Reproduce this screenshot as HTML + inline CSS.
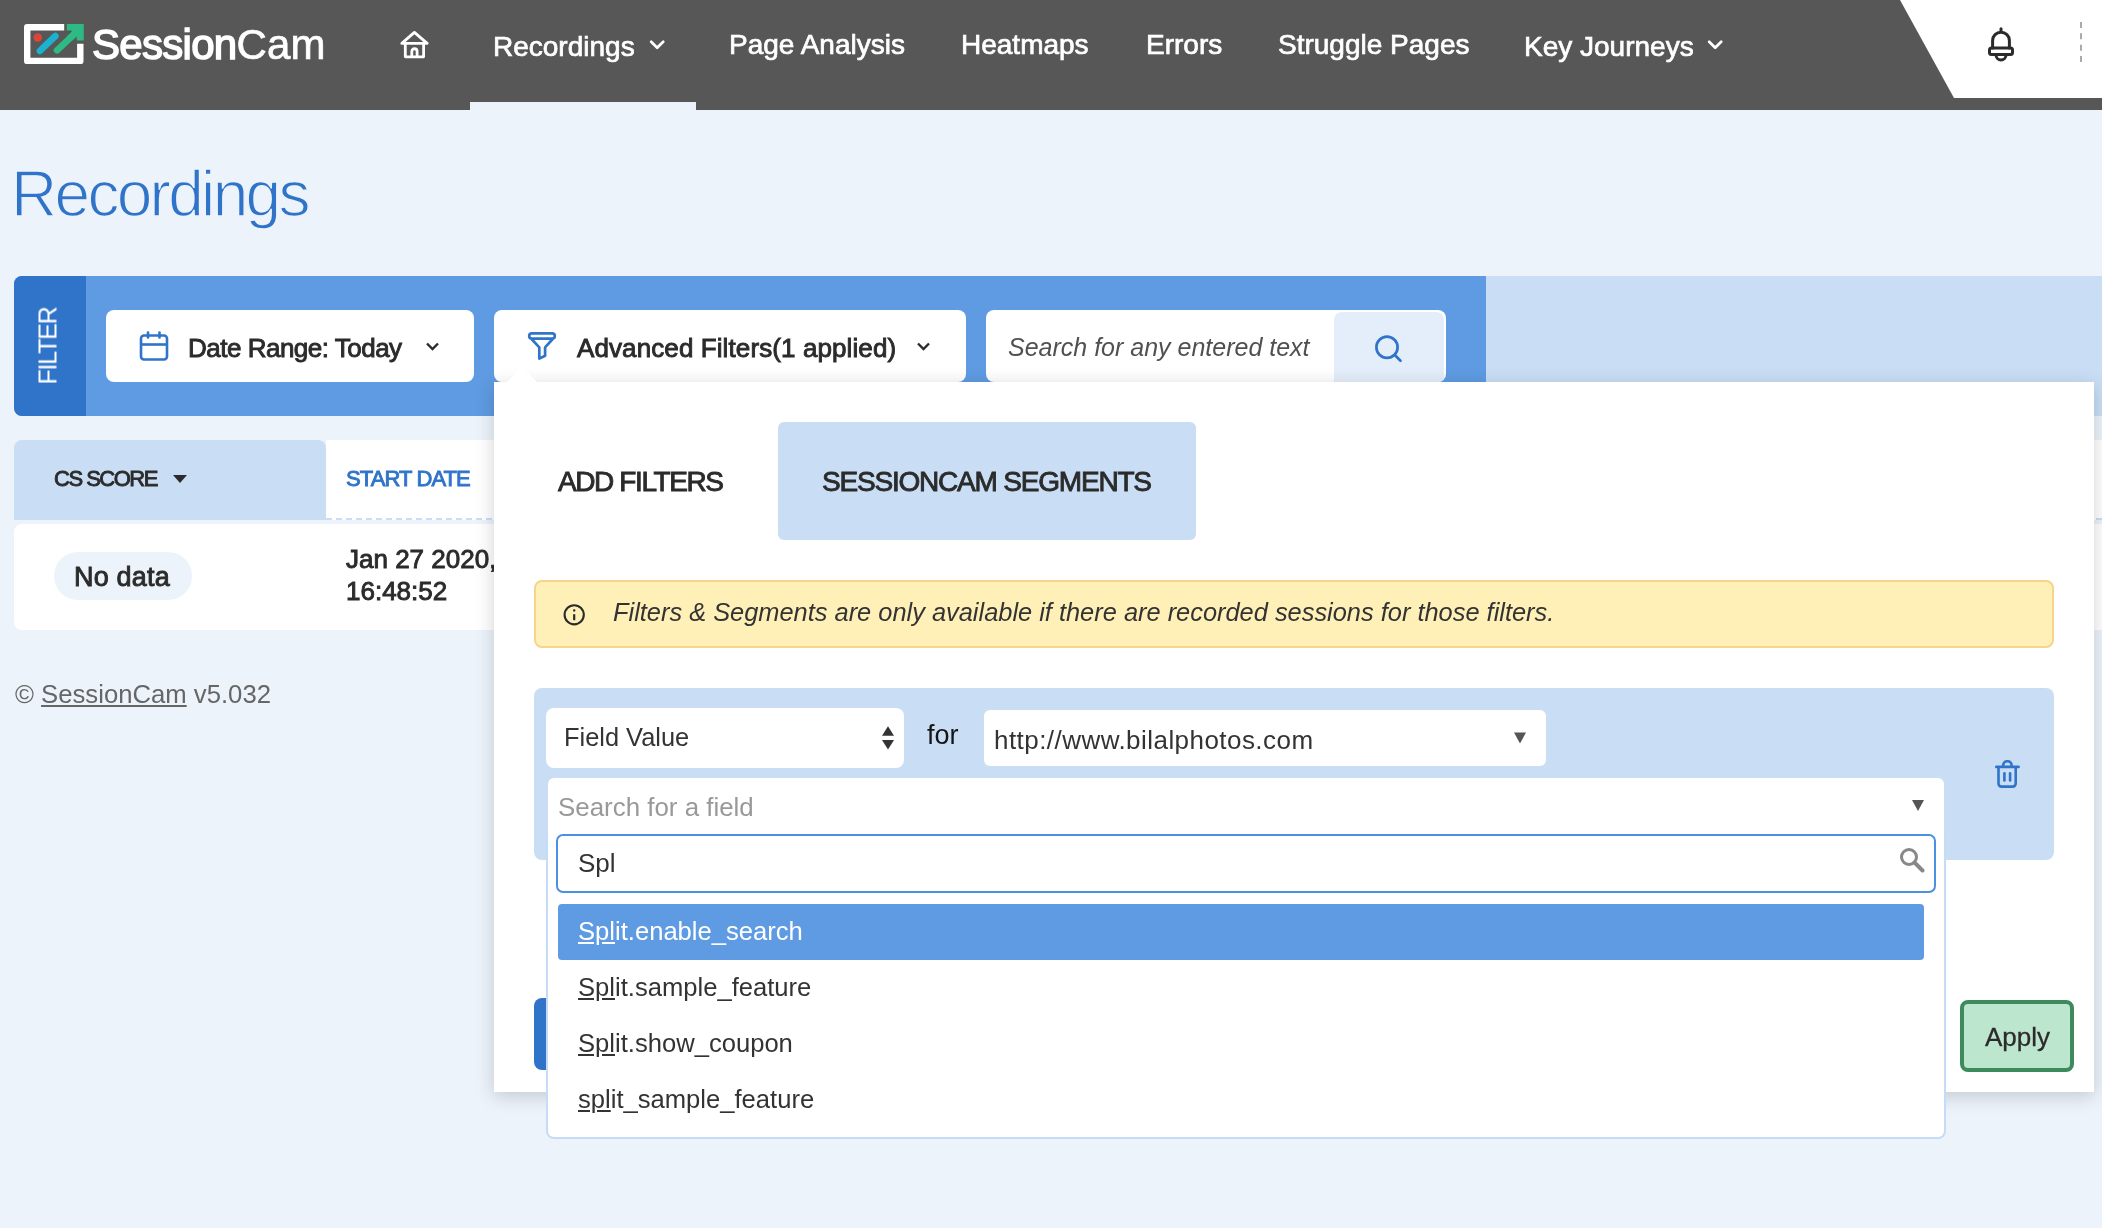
<!DOCTYPE html>
<html><head><meta charset="utf-8">
<style>
html,body{margin:0;padding:0}
body{width:2102px;height:1228px;overflow:hidden;background:#edf3fb;position:relative;font-family:"Liberation Sans",sans-serif;color:#2b2b2b}
.a{position:absolute}
.t{position:absolute;white-space:nowrap;line-height:1;will-change:transform}
</style></head>
<body>
<!-- HEADER -->
<div class="a" style="left:0;top:0;width:2102px;height:110px;background:#565756"></div>
<div class="a" style="left:470px;top:102px;width:226px;height:8px;background:#edf3fb"></div>
<div class="a" style="left:1900px;top:0;width:202px;height:98px;background:#fff;clip-path:polygon(0 0,100% 0,100% 100%,54px 100%)"></div>
<!-- bell -->
<svg class="a" style="left:1986px;top:25px" width="30" height="38" viewBox="0 0 30 38">
 <g fill="none" stroke="#2b2b2b" stroke-width="3" stroke-linejoin="round" stroke-linecap="round">
  <line x1="15" y1="3.7" x2="15" y2="6"/>
  <path d="M6.6 23 V15.6 A8.4 8.4 0 0 1 23.4 15.6 V23"/>
  <rect x="3.5" y="23" width="23" height="6.5" rx="2"/>
  <path d="M10 30 A5 5 0 0 0 20 30"/>
 </g>
</svg>
<div class="a" style="left:2080px;top:22px;width:0;height:40px;border-left:2px dashed #aaa"></div>

<!-- LOGO -->
<svg class="a" style="left:24px;top:24px" width="60" height="41" viewBox="0 0 60 41">
 <path d="M40.2 3.2 H3.2 V36.9 H56.3 V19.8" fill="none" stroke="#fff" stroke-width="6.4" stroke-linejoin="round"/>
 <polygon points="42.8,0 59.8,0 59.8,16.4 52.8,16.4 52.8,12.3 46.9,6.4 42.8,6.4" fill="#2dba84"/>
 <circle cx="13.7" cy="13.5" r="4.3" fill="#d9473a"/>
 <line x1="15.9" y1="26.9" x2="31.4" y2="12" stroke="#1bb2cf" stroke-width="6.6" stroke-linecap="round"/>
 <line x1="33" y1="26.3" x2="51" y2="9.4" stroke="#2dba84" stroke-width="6.6" stroke-linecap="round"/>
 <line x1="45" y1="15" x2="53" y2="7.5" stroke="#2dba84" stroke-width="6.6"/>
</svg>
<div class="t" style="left:92px;top:24px;font-size:42px;color:#fff;letter-spacing:-0.5px"><span style="-webkit-text-stroke:1.5px #fff;letter-spacing:-0.7px">Session</span><span style="letter-spacing:0.2px;-webkit-text-stroke:0.7px #fff">Cam</span></div>

<!-- NAV -->
<svg class="a" style="left:400px;top:30px" width="30" height="30" viewBox="0 0 30 30">
 <g fill="none" stroke="#fff" stroke-width="2.8" stroke-linejoin="round" stroke-linecap="round">
  <path d="M1.8 13.4 L14.4 2.4 L27.2 13.4 Z"/>
  <path d="M5.3 13.6 V26.8 H23.6 V13.6"/>
  <path d="M11.8 26.6 V21.4 A2.65 2.65 0 0 1 17.1 21.4 V26.6"/>
 </g>
</svg>
<div class="t" style="left:492.5px;top:33.3px;font-size:28px;color:#fff;-webkit-text-stroke:0.7px #fff">Recordings</div>
<svg class="a" style="left:649px;top:40px" width="16" height="10" viewBox="0 0 16 10"><path d="M2.2 1.8 L8.2 7.8 L14.2 1.8" fill="none" stroke="#fff" stroke-width="2.7" stroke-linecap="round" stroke-linejoin="round"/></svg>
<div class="t" style="left:728.5px;top:31.3px;font-size:28px;color:#fff;-webkit-text-stroke:0.7px #fff">Page Analysis</div>
<div class="t" style="left:960.5px;top:31.3px;font-size:28px;color:#fff;-webkit-text-stroke:0.7px #fff">Heatmaps</div>
<div class="t" style="left:1146px;top:31.3px;font-size:28px;color:#fff;-webkit-text-stroke:0.7px #fff">Errors</div>
<div class="t" style="left:1277.5px;top:31.3px;font-size:28px;color:#fff;-webkit-text-stroke:0.7px #fff">Struggle Pages</div>
<div class="t" style="left:1524px;top:33.3px;font-size:28px;color:#fff;-webkit-text-stroke:0.7px #fff">Key Journeys</div>
<svg class="a" style="left:1707px;top:40px" width="16" height="10" viewBox="0 0 16 10"><path d="M2.2 1.8 L8.2 7.8 L14.2 1.8" fill="none" stroke="#fff" stroke-width="2.7" stroke-linecap="round" stroke-linejoin="round"/></svg>

<!-- TITLE -->
<div class="t" style="left:11px;top:161.5px;font-size:64px;color:#2f74c8;letter-spacing:-2.7px;-webkit-text-stroke:1.4px #edf3fb">Recordings</div>


<!-- FILTER BAR -->
<div class="a" style="left:14px;top:276px;width:1472px;height:140px;background:#5f9be2;border-radius:8px 0 0 8px"></div>
<div class="a" style="left:14px;top:276px;width:72px;height:140px;background:#2f74c9;border-radius:8px 0 0 8px"></div>
<div class="a" style="left:1486px;top:276px;width:616px;height:140px;background:#c9def5"></div>
<div class="t" style="left:48px;top:346px;font-size:25px;color:#fff;letter-spacing:-1.2px;transform:translate(-50%,-50%) rotate(-90deg);transform-origin:center">FILTER</div>
<!-- date range -->
<div class="a" style="left:106px;top:310px;width:368px;height:72px;background:#fff;border-radius:8px"></div>
<svg class="a" style="left:138px;top:330px" width="32" height="32" viewBox="0 0 32 32">
 <g fill="none" stroke="#2f74c9" stroke-width="2.6" stroke-linecap="round">
  <rect x="3" y="5.5" width="26" height="24" rx="3"/>
  <line x1="4" y1="14.5" x2="28" y2="14.5" stroke-linecap="butt"/>
  <line x1="10" y1="2.5" x2="10" y2="7.5"/>
  <line x1="21.5" y1="2.5" x2="21.5" y2="7.5"/>
 </g>
</svg>
<div class="t" style="left:188px;top:335px;font-size:26px;letter-spacing:-0.5px;color:#2b2b2b;-webkit-text-stroke:0.9px currentColor">Date Range: Today</div>
<svg class="a" style="left:425px;top:341px" width="15" height="11" viewBox="0 0 15 11"><path d="M2 2.5 L7.5 8 L13 2.5" fill="none" stroke="#2b2b2b" stroke-width="2.4"/></svg>
<!-- advanced filters -->
<div class="a" style="left:494px;top:310px;width:472px;height:72px;background:#fff;border-radius:8px"></div>
<svg class="a" style="left:510px;top:320px" width="60" height="45" viewBox="0 0 60 45">
 <g fill="none" stroke="#2f74c9" stroke-width="2.7" stroke-linejoin="round">
  <rect x="19.2" y="13.3" width="25.6" height="5.4" rx="2.7"/>
  <path d="M21.5 19 L29.3 27.3 V38.6 L35.1 35.7 V27.3 L42.7 19"/>
 </g>
</svg>
<div class="t" style="left:577px;top:335px;font-size:26px;letter-spacing:0.1px;color:#2b2b2b;-webkit-text-stroke:0.9px currentColor">Advanced Filters(1 applied)</div>
<svg class="a" style="left:916px;top:341px" width="15" height="11" viewBox="0 0 15 11"><path d="M2 2.5 L7.5 8 L13 2.5" fill="none" stroke="#2b2b2b" stroke-width="2.4"/></svg>
<!-- search -->
<div class="a" style="left:986px;top:310px;width:460px;height:72px;background:#fff;border-radius:8px;overflow:hidden">
  <div class="a" style="left:348px;top:2px;width:110px;height:70px;background:#e4eefa;border-radius:8px 8px 0 0"></div>
</div>
<div class="t" style="left:1008px;top:335px;font-size:25px;font-style:italic;color:#505050">Search for any entered text</div>
<svg class="a" style="left:1370px;top:330px" width="36" height="36" viewBox="0 0 36 36">
 <g fill="none" stroke="#2f74c9" stroke-width="2.7" stroke-linecap="round">
  <circle cx="17" cy="17.3" r="10.6"/>
  <line x1="24.8" y1="25" x2="30.5" y2="30.8"/>
 </g>
</svg>

<!-- TABLE -->
<div class="a" style="left:14px;top:440px;width:312px;height:80px;background:#c9def5;border-radius:8px 8px 0 0"></div>
<div class="a" style="left:326px;top:440px;width:1776px;height:78px;background:#fff;border-bottom:2px dashed #c9def5"></div>
<div class="t" style="left:54px;top:468px;font-size:22px;letter-spacing:-1.5px;-webkit-text-stroke:0.9px currentColor;color:#2b2b2b">CS SCORE</div>
<svg class="a" style="left:172px;top:474px" width="16" height="10" viewBox="0 0 16 10"><polygon points="1,1 15,1 8,9" fill="#2b2b2b"/></svg>
<div class="t" style="left:346px;top:468px;font-size:22px;letter-spacing:-0.9px;-webkit-text-stroke:0.9px currentColor;color:#2f74c9">START DATE</div>
<div class="a" style="left:14px;top:524px;width:2088px;height:106px;background:#fff;border-radius:8px 0 0 8px"></div>
<div class="a" style="left:54px;top:552px;width:138px;height:48px;background:#edf3fb;border-radius:24px"></div>
<div class="t" style="left:74px;top:564px;font-size:27px;letter-spacing:0.2px;-webkit-text-stroke:0.9px currentColor;color:#2b2b2b">No data</div>
<div class="t" style="left:346px;top:546px;font-size:26px;-webkit-text-stroke:0.9px currentColor;color:#2b2b2b">Jan 27 2020,</div>
<div class="t" style="left:346px;top:578px;font-size:26px;-webkit-text-stroke:0.9px currentColor;color:#2b2b2b">16:48:52</div>
<div class="t" style="left:15px;top:682px;font-size:25.7px;color:#666">© <span style="text-decoration:underline">SessionCam</span> v5.032</div>


<!-- POPUP -->
<div class="a" style="left:494px;top:382px;width:1600px;height:710px;background:#fff;box-shadow:0 4px 18px rgba(0,0,0,0.18)"></div>
<div class="a" style="left:494px;top:370px;width:1600px;height:12px;background:#fff;clip-path:polygon(0 100%,100% 100%,100% 101%,0 101%)"></div>
<svg class="a" style="left:507px;top:367px" width="30" height="16" viewBox="0 0 30 16"><polygon points="0,15 15,0 30,15 30,16 0,16" fill="#fff"/></svg>
<!-- tabs -->
<div class="t" style="left:558px;top:468px;font-size:28px;letter-spacing:-1.4px;-webkit-text-stroke:0.9px currentColor;color:#2b2b2b">ADD FILTERS</div>
<div class="a" style="left:778px;top:422px;width:418px;height:118px;background:#c9def5;border-radius:6px"></div>
<div class="t" style="left:822px;top:468px;font-size:28px;letter-spacing:-1.2px;-webkit-text-stroke:0.9px currentColor;color:#2b2b2b">SESSIONCAM SEGMENTS</div>
<!-- alert -->
<div class="a" style="left:534px;top:580px;width:1516px;height:64px;background:#fff0b8;border:2px solid #f5d48c;border-radius:8px"></div>
<svg class="a" style="left:561px;top:602px" width="26" height="26" viewBox="0 0 26 26">
 <circle cx="13.2" cy="12.8" r="9.6" fill="none" stroke="#2b2b2b" stroke-width="2.1"/>
 <rect x="12.1" y="12.2" width="2.2" height="6" fill="#2b2b2b"/><circle cx="13.2" cy="8.4" r="1.2" fill="#2b2b2b"/>
</svg>
<div class="t" style="left:613px;top:600px;font-size:25.4px;font-style:italic;color:#333">Filters &amp; Segments are only available if there are recorded sessions for those filters.</div>
<!-- filter row -->
<div class="a" style="left:534px;top:688px;width:1520px;height:172px;background:#c9def5;border-radius:8px"></div>
<div class="a" style="left:546px;top:708px;width:358px;height:60px;background:#fff;border-radius:8px"></div>
<div class="t" style="left:564px;top:725px;font-size:25.4px;color:#333">Field Value</div>
<svg class="a" style="left:880px;top:725px" width="16" height="26" viewBox="0 0 16 26"><polygon points="2,10.7 8,1.3 14,10.7" fill="#333"/><polygon points="2,15 14,15 8,24.5" fill="#333"/></svg>
<div class="t" style="left:927px;top:722px;font-size:27px;color:#151515">for</div>
<div class="a" style="left:984px;top:710px;width:562px;height:56px;background:#fff;border-radius:6px"></div>
<div class="t" style="left:994px;top:727px;font-size:26px;letter-spacing:0.45px;color:#333">http://www.bilalphotos.com</div>
<svg class="a" style="left:1512px;top:731px" width="16" height="14" viewBox="0 0 16 14"><polygon points="2,1.5 14,1.5 8,12.5" fill="#555"/></svg>
<svg class="a" style="left:1994px;top:759px" width="28" height="32" viewBox="0 0 28 32">
 <g fill="none" stroke="#2f74c9" stroke-width="2.6" stroke-linejoin="round" stroke-linecap="round">
  <line x1="2.3" y1="7.9" x2="24.6" y2="7.9"/>
  <path d="M9.2 7.5 V6 A3.8 3.8 0 0 1 13 2.2 H13.8 A3.8 3.8 0 0 1 17.6 6 V7.5"/>
  <path d="M4.5 8.5 V24.6 A3 3 0 0 0 7.5 27.6 H18.7 A3 3 0 0 0 21.7 24.6 V8.5"/>
  <line x1="10.4" y1="14.2" x2="10.4" y2="21.4"/>
  <line x1="16.1" y1="14.2" x2="16.1" y2="21.4"/>
 </g>
</svg>
<!-- select2 -->
<div class="a" style="left:548px;top:778px;width:1396px;height:60px;background:#fff;border-radius:6px 6px 0 0"></div>
<div class="t" style="left:558px;top:795px;font-size:25.9px;color:#999">Search for a field</div>
<svg class="a" style="left:1910px;top:798px" width="16" height="14" viewBox="0 0 16 14"><polygon points="2,2 14,2 8,13" fill="#555"/></svg>
<!-- blue button behind -->
<div class="a" style="left:534px;top:998px;width:60px;height:72px;background:#2f74c9;border-radius:8px"></div>
<!-- apply -->
<div class="a" style="left:1960px;top:1000px;width:106px;height:64px;background:#bde6cf;border:4px solid #3d8a5c;border-radius:8px"></div>
<div class="t" style="left:1985px;top:1024px;font-size:26px;color:#2b2b2b;-webkit-text-stroke:0.3px #2b2b2b">Apply</div>
<!-- dropdown -->
<div class="a" style="left:546px;top:834px;width:1396px;height:303px;background:#fff;border:2px solid #c6dbf5;border-top:none;border-radius:0 0 8px 8px"></div>
<div class="a" style="left:556px;top:834px;width:1376px;height:55px;background:#fff;border:2px solid #4b90e2;border-radius:7px"></div>
<div class="t" style="left:578px;top:850px;font-size:26px;color:#333">Spl</div>
<svg class="a" style="left:1898px;top:846px" width="28" height="28" viewBox="0 0 28 28">
 <circle cx="11" cy="11" r="7.5" fill="none" stroke="#888" stroke-width="3"/>
 <line x1="16.5" y1="16.5" x2="24.5" y2="24.5" stroke="#888" stroke-width="4" stroke-linecap="round"/>
</svg>
<div class="a" style="left:558px;top:904px;width:1366px;height:56px;background:#5f9be2;border-radius:4px"></div>
<div class="t" style="left:578px;top:919px;font-size:25.6px;color:#fff"><u>Spl</u>it.enable_search</div>
<div class="t" style="left:578px;top:975px;font-size:25.6px;color:#333"><u>Spl</u>it.sample_feature</div>
<div class="t" style="left:578px;top:1031px;font-size:25.6px;color:#333"><u>Spl</u>it.show_coupon</div>
<div class="t" style="left:578px;top:1087px;font-size:25.6px;color:#333"><u>spl</u>it_sample_feature</div>

</body></html>
